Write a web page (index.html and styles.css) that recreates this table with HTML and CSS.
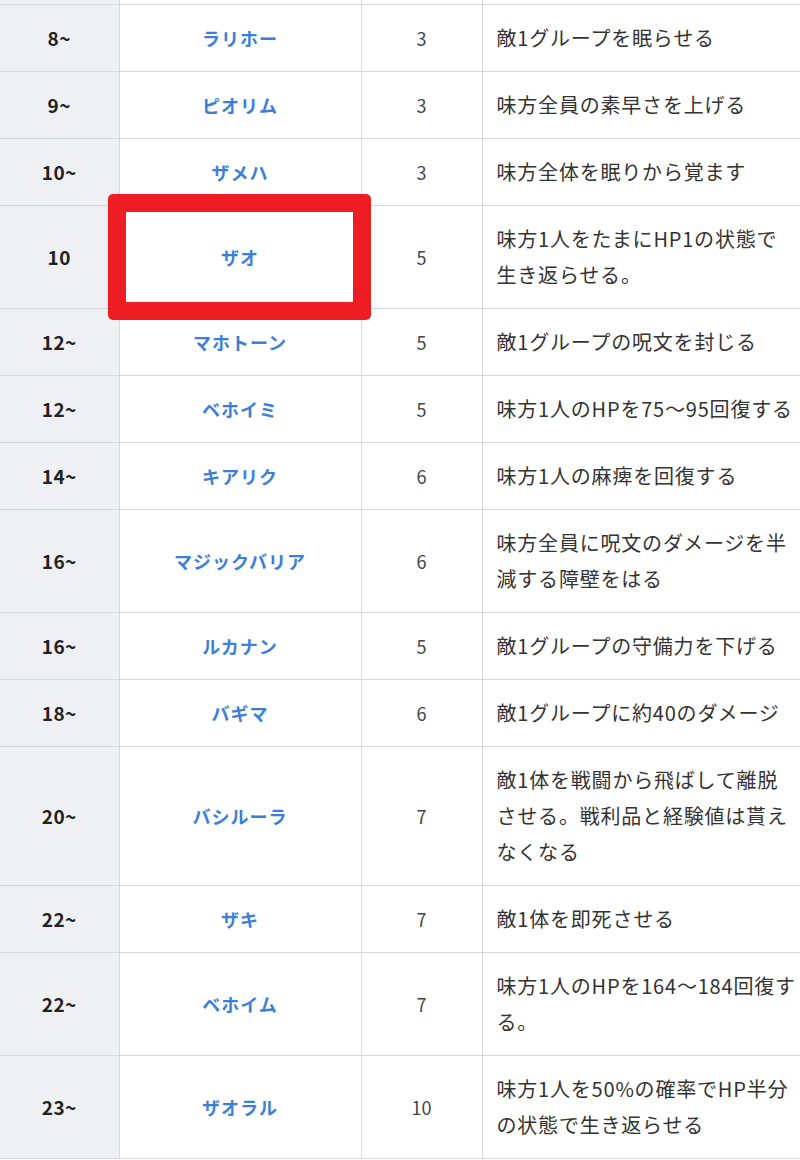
FILE: index.html
```html
<!DOCTYPE html>
<html lang="ja">
<head>
<meta charset="utf-8">
<link rel="stylesheet" href="styles.css">
</head>
<body>
<div class="wrap">
<table class="spells">
  <colgroup><col class="c1"><col class="c2"><col class="c3"><col class="c4"></colgroup>
  <tr class="cut"><td class="lv"></td><td></td><td></td><td></td></tr>
  <tr><td class="lv">8~</td><td class="nm">ラリホー</td><td class="mp">3</td><td class="ds">敵1グループを眠らせる</td></tr>
  <tr><td class="lv">9~</td><td class="nm">ピオリム</td><td class="mp">3</td><td class="ds">味方全員の素早さを上げる</td></tr>
  <tr><td class="lv">10~</td><td class="nm">ザメハ</td><td class="mp">3</td><td class="ds">味方全体を眠りから覚ます</td></tr>
  <tr><td class="lv">10</td><td class="nm">ザオ</td><td class="mp">5</td><td class="ds">味方1人をたまにHP1の状態で<br>生き返らせる。</td></tr>
  <tr><td class="lv">12~</td><td class="nm">マホトーン</td><td class="mp">5</td><td class="ds">敵1グループの呪文を封じる</td></tr>
  <tr><td class="lv">12~</td><td class="nm">ベホイミ</td><td class="mp">5</td><td class="ds">味方1人のHPを75〜95回復する</td></tr>
  <tr><td class="lv">14~</td><td class="nm">キアリク</td><td class="mp">6</td><td class="ds">味方1人の麻痺を回復する</td></tr>
  <tr><td class="lv">16~</td><td class="nm">マジックバリア</td><td class="mp">6</td><td class="ds">味方全員に呪文のダメージを半<br>減する障壁をはる</td></tr>
  <tr><td class="lv">16~</td><td class="nm">ルカナン</td><td class="mp">5</td><td class="ds">敵1グループの守備力を下げる</td></tr>
  <tr><td class="lv">18~</td><td class="nm">バギマ</td><td class="mp">6</td><td class="ds">敵1グループに約40のダメージ</td></tr>
  <tr><td class="lv">20~</td><td class="nm">バシルーラ</td><td class="mp">7</td><td class="ds">敵1体を戦闘から飛ばして離脱<br>させる。戦利品と経験値は貰え<br>なくなる</td></tr>
  <tr><td class="lv">22~</td><td class="nm">ザキ</td><td class="mp">7</td><td class="ds">敵1体を即死させる</td></tr>
  <tr><td class="lv">22~</td><td class="nm">ベホイム</td><td class="mp">7</td><td class="ds">味方1人のHPを164〜184回復す<br>る。</td></tr>
  <tr><td class="lv">23~</td><td class="nm">ザオラル</td><td class="mp">10</td><td class="ds">味方1人を50%の確率でHP半分<br>の状態で生き返らせる</td></tr>
</table>
<div class="highlight"></div>
</div>
</body>
</html>
```

FILE: styles.css
```css
html, body {
  margin: 0;
  padding: 0;
  background: #ffffff;
}
body {
  width: 800px;
  height: 1160px;
  overflow: hidden;
  font-family: "Noto Sans CJK JP", "Noto Sans", sans-serif;
}
.wrap {
  position: relative;
  width: 800px;
}
.spells {
  border-collapse: collapse;
  table-layout: fixed;
  width: 812px;
}
.c1 { width: 119px; }
.c2 { width: 242px; }
.c3 { width: 121px; }
.c4 { width: 330px; }
.spells td {
  border: 1px solid #d6d8dd;
  padding: 15px 0;
  line-height: 36px;
  text-align: center;
  vertical-align: middle;
  color: #333333;
}
.spells td:first-child { border-left: none; }
.spells .cut td {
  padding: 0;
  height: 4px;
  line-height: 4px;
  border-top: none;
}
.spells .lv {
  background: #eef0f4;
  font-weight: 700;
  font-size: 19px;
  letter-spacing: 0.5px;
  color: #222222;
}
.spells .nm {
  font-weight: 700;
  font-size: 18px;
  letter-spacing: 1px;
  color: #3d7fd8;
}
.spells .mp {
  font-size: 18px;
  color: #444444;
}
.spells .ds {
  text-align: left;
  padding-left: 14px;
  padding-right: 0;
  font-size: 20px;
  letter-spacing: 0.8px;
  white-space: nowrap;
  color: #333333;
}
.highlight {
  position: absolute;
  left: 108px;
  top: 194px;
  width: 263px;
  height: 126px;
  box-sizing: border-box;
  border: 18px solid #ee1d23;
  border-radius: 5px;
}
```
